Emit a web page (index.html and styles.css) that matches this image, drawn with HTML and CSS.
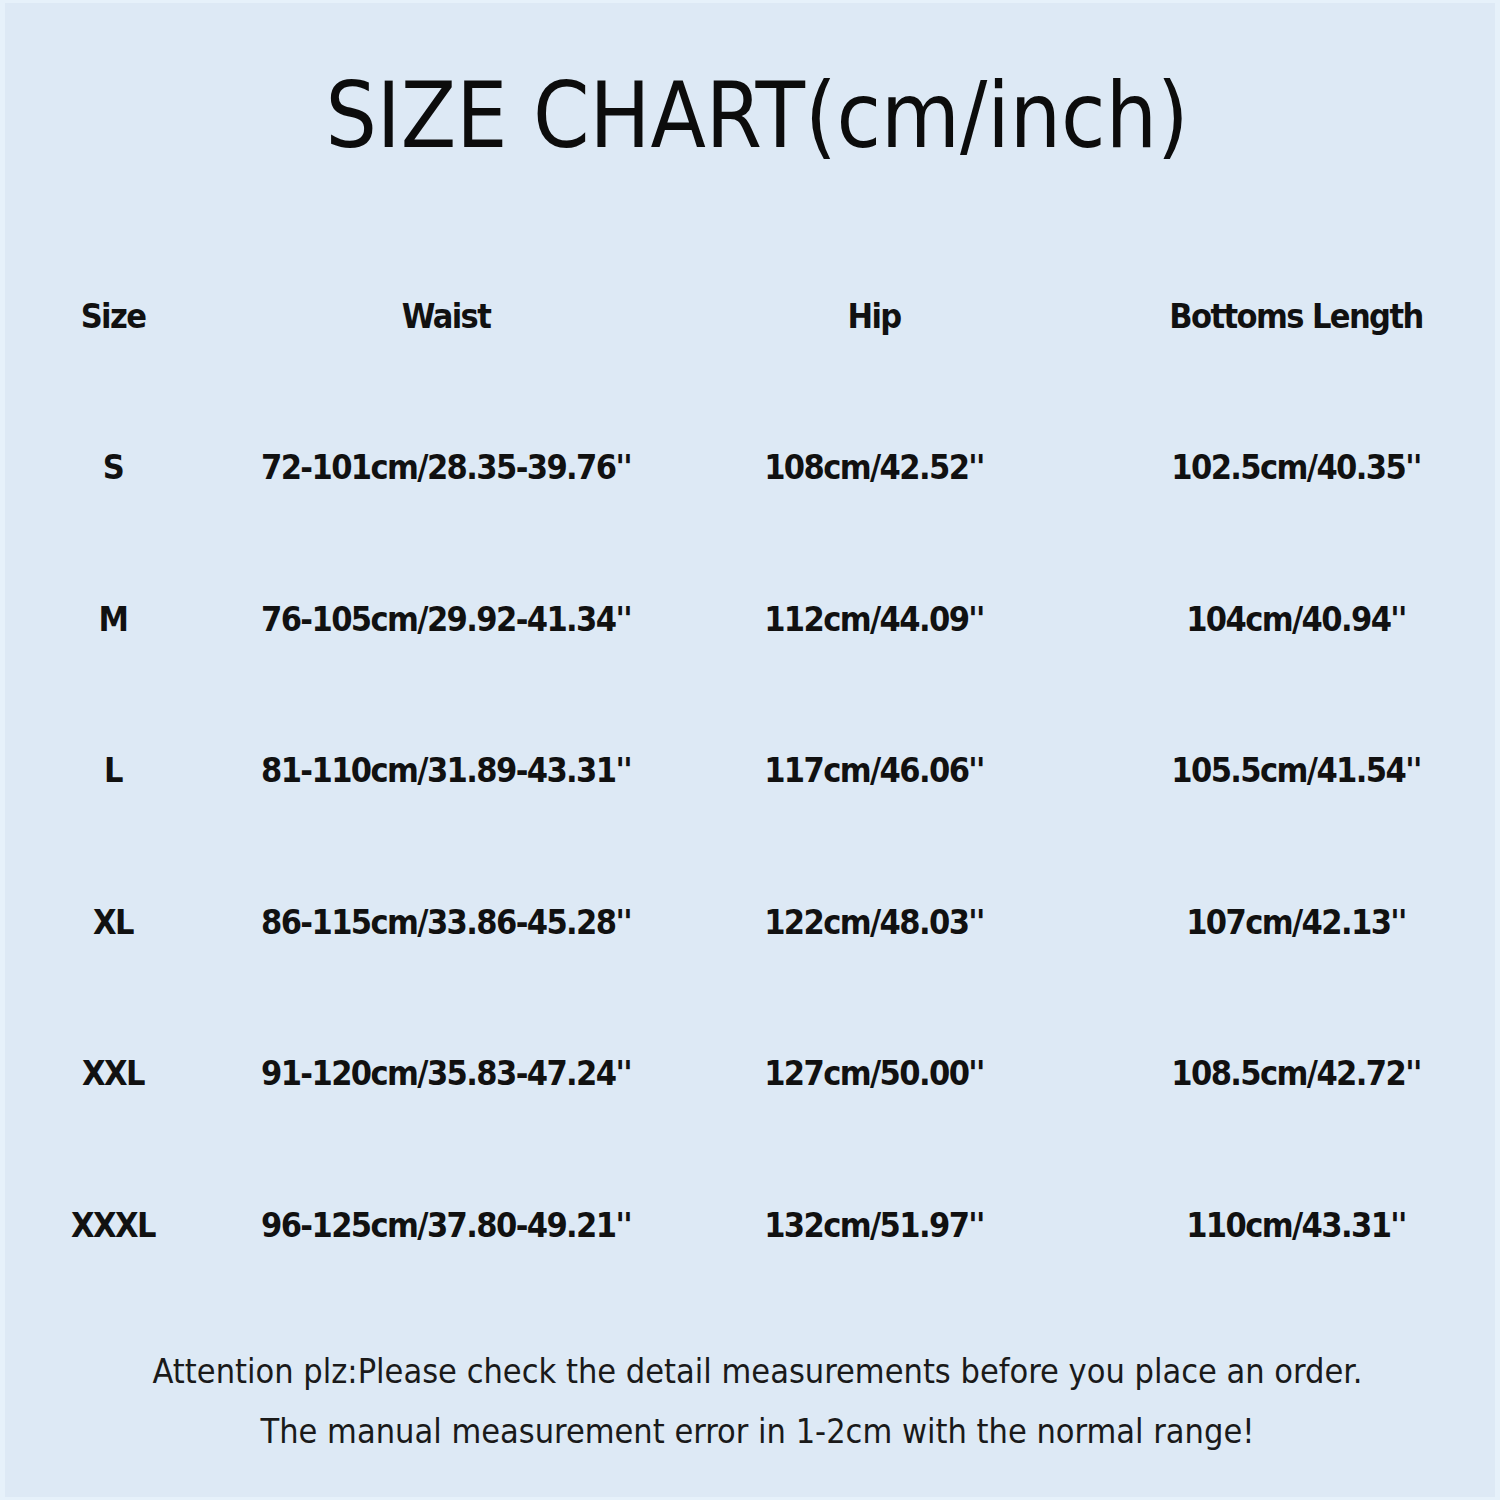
FILE: index.html
```html
<!DOCTYPE html>
<html lang="en">
<head>
<meta charset="utf-8">
<title>Size Chart</title>
<link rel="stylesheet" href="styles.css">
</head>
<body>
<main class="page">
  <header class="title-wrap">
    <h1 class="title">SIZE CHART(cm/inch)</h1>
  </header>
  <section class="chart">
    <div class="cell head">Size</div>
    <div class="cell head">Waist</div>
    <div class="cell head">Hip</div>
    <div class="cell head">Bottoms Length</div>

    <div class="cell">S</div>
    <div class="cell">72-101cm/28.35-39.76''</div>
    <div class="cell">108cm/42.52''</div>
    <div class="cell">102.5cm/40.35''</div>

    <div class="cell">M</div>
    <div class="cell">76-105cm/29.92-41.34''</div>
    <div class="cell">112cm/44.09''</div>
    <div class="cell">104cm/40.94''</div>

    <div class="cell">L</div>
    <div class="cell">81-110cm/31.89-43.31''</div>
    <div class="cell">117cm/46.06''</div>
    <div class="cell">105.5cm/41.54''</div>

    <div class="cell">XL</div>
    <div class="cell">86-115cm/33.86-45.28''</div>
    <div class="cell">122cm/48.03''</div>
    <div class="cell">107cm/42.13''</div>

    <div class="cell">XXL</div>
    <div class="cell">91-120cm/35.83-47.24''</div>
    <div class="cell">127cm/50.00''</div>
    <div class="cell">108.5cm/42.72''</div>

    <div class="cell">XXXL</div>
    <div class="cell">96-125cm/37.80-49.21''</div>
    <div class="cell">132cm/51.97''</div>
    <div class="cell">110cm/43.31''</div>
  </section>
  <footer class="note">
    <p>Attention plz:Please check the detail measurements before you place an order.</p>
    <p>The manual measurement error in 1-2cm with the normal range!</p>
  </footer>
</main>
</body>
</html>
```

FILE: styles.css
```css
html, body {
  margin: 0;
  padding: 0;
  background: #e6f1fa;
}

.page {
  width: 1490px;
  height: 1494px;
  margin: 3px 4px 3px 5px;
  background: #dde9f5;
  overflow: hidden;
  color: #111;
}

.title-wrap {
  height: 237px;
  display: flex;
  align-items: center;
  justify-content: center;
  padding-left: 14px;
  padding-bottom: 12px;
  box-sizing: border-box;
}

.title {
  margin: 0;
  font-family: "DejaVu Sans Condensed", "DejaVu Sans", sans-serif;
  font-weight: 400;
  font-size: 90px;
  line-height: 1;
  color: #0c0c0c;
}

.chart {
  display: grid;
  grid-template-columns: 216px 450px 406px 438px;
  grid-auto-rows: 151.5px;
}

.cell {
  display: flex;
  align-items: center;
  justify-content: center;
  white-space: nowrap;
  font-family: "DejaVu Sans Condensed", "DejaVu Sans", sans-serif;
  font-weight: 700;
  font-size: 34px;
  letter-spacing: -1.6px;
  color: #111;
}

.note {
  padding-top: 40px;
  padding-left: 15px;
  text-align: center;
  font-family: "DejaVu Sans Condensed", "DejaVu Sans", sans-serif;
  font-size: 34px;
  color: #1a1a1a;
}

.note p {
  margin: 0;
  line-height: 60px;
}
```
